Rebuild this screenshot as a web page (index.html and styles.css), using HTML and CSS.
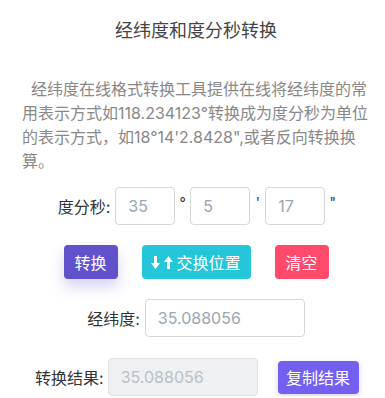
FILE: index.html
```html
<!DOCTYPE html>
<html lang="zh">
<head>
<meta charset="utf-8">
<link rel="stylesheet" href="styles.css">
</head>
<body>
<div class="page">
  <h1 class="title">经纬度和度分秒转换</h1>
  <p class="desc">&nbsp;&nbsp;经纬度在线格式转换工具提供在线将经纬度的常用表示方式如118.234123°转换成为度分秒为单位的表示方式，如18°14'2.8428",或者反向转换换算。</p>
  <div class="row dms">
    <span class="label">度分秒:</span>
    <input class="field small" value="35">
    <span class="unit">°</span>
    <input class="field small" value="5">
    <span class="unit">'</span>
    <input class="field small" value="17">
    <span class="unit">"</span>
  </div>
  <div class="row buttons">
    <button class="btn convert">转换</button>
    <button class="btn swap"><svg class="arrows" width="24" height="13" viewBox="0 0 24 13"><path d="M3 0h3v7h3l-4.5 6L0 7h3z" fill="#fff"/><path d="M16 13h3V6h3l-4.5-6L13 6h3z" fill="#fff"/></svg>交换位置</button>
    <button class="btn clear">清空</button>
  </div>
  <div class="row latlng">
    <span class="label">经纬度:</span>
    <input class="field wide" value="35.088056">
  </div>
  <div class="row result">
    <span class="label">转换结果:</span>
    <input class="field res" value="35.088056" disabled>
    <button class="btn copy">复制结果</button>
  </div>
</div>
</body>
</html>
```
FILE: styles.css
```css
* { box-sizing: border-box; }
body {
  margin: 0;
  background: #fff;
  font-family: "Inter", "Noto Sans CJK SC", sans-serif;
  color: #333;
}
.page {
  width: 385px;
  padding: 0 15px 0 22px;
}
.title {
  margin: 0;
  padding-top: 19px;
  font-size: 18px;
  font-weight: normal;
  line-height: 24px;
  text-align: center;
  color: #444;
}
.desc {
  margin: 34px 0 0;
  font-size: 16px;
  line-height: 24px;
  color: #888;
}
.row {
  display: flex;
  align-items: center;
  justify-content: center;
}
.label {
  font-size: 16px;
  color: #333;
  white-space: nowrap;
}
.field {
  height: 38px;
  border: 1px solid #d8d8d8;
  border-radius: 4px;
  padding: 0 12px;
  font-family: inherit;
  font-size: 16px;
  color: #9aa6b2;
  background: #fff;
  outline: none;
}
.dms {
  margin-top: 14px;
  padding-left: 6px;
}
.dms .label { margin-right: 5px; }
.field.small { width: 60px; }
.unit {
  width: 15px;
  text-align: center;
  font-size: 14px;
  color: #333;
  margin-top: -8px;
}
.buttons {
  margin-top: 20px;
  gap: 24px;
}
.btn {
  height: 34px;
  border: none;
  border-radius: 4px;
  color: #fff;
  font-family: inherit;
  font-size: 16px;
  padding: 0;
  white-space: nowrap;
}
.convert {
  width: 54px;
  background: #6152cc;
  box-shadow: 0 8px 14px rgba(97, 82, 204, 0.25);
}
.swap {
  width: 109px;
  background: #26c6da;
  display: flex;
  align-items: center;
  justify-content: center;
}
.arrows { margin-right: 1px; }
.clear {
  width: 54px;
  background: #ff4a6c;
}
.latlng {
  margin-top: 20px;
}
.latlng .label { margin-right: 5px; }
.field.wide { width: 160px; }
.result {
  margin-top: 21px;
  justify-content: flex-start;
  padding-left: 13px;
}
.result .label { margin-right: 4px; }
.field.res {
  width: 150px;
  background: #eef0f2;
  color: #b9c0c8;
  border-color: #dfe1e4;
}
.copy {
  margin-left: 20px;
  width: 81px;
  height: 33px;
  background: #7360f0;
  box-shadow: 0 3px 6px rgba(115, 96, 240, 0.25);
}
```
